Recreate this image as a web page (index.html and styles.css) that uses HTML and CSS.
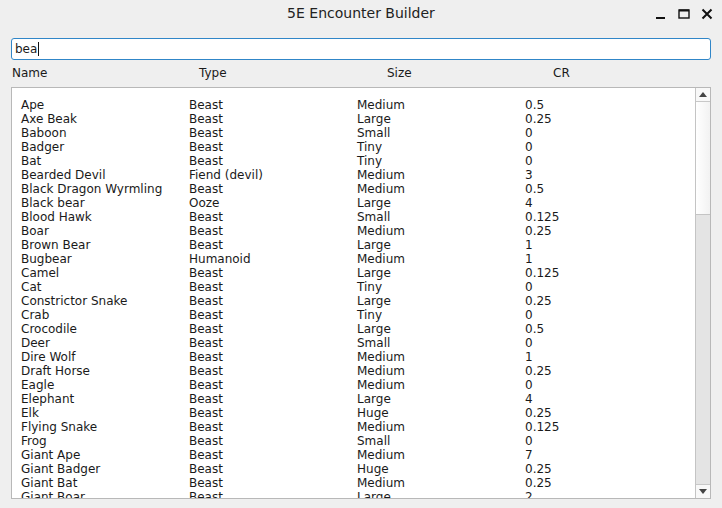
FILE: index.html
```html
<!DOCTYPE html>
<html>
<head>
<meta charset="utf-8">
<link rel="stylesheet" href="styles.css">
</head>
<body>
<div class="window">
  <div class="titlebar">
    <div class="title">5E Encounter Builder</div>
    <div class="controls">
      <svg class="ctl" width="12" height="12" viewBox="0 0 12 12"><rect x="1" y="9" width="9" height="2" fill="#111"/></svg>
      <svg class="ctl" width="12" height="12" viewBox="0 0 12 12"><rect x="1" y="2" width="10" height="8" fill="none" stroke="#111" stroke-width="1.4"/><rect x="1" y="1.5" width="10" height="2" fill="#111"/></svg>
      <svg class="ctl" width="12" height="12" viewBox="0 0 12 12"><path d="M1.5 1.5 L10.5 10.5 M10.5 1.5 L1.5 10.5" stroke="#111" stroke-width="2"/></svg>
    </div>
  </div>
  <div class="content">
    <div class="search"><span>bea</span><span class="caret"></span></div>
    <div class="header">
      <div>Name</div><div>Type</div><div>Size</div><div>CR</div>
    </div>
    <div class="list">
      <div class="rows" id="rows"></div>
      <div class="scrollbar">
        <div class="sbtn"><svg width="8" height="5" viewBox="0 0 8 5"><path d="M4 0 L8 5 L0 5 Z" fill="#444"/></svg></div>
        <div class="track">
          <div class="thumb"></div>
        </div>
        <div class="sbtn"><svg width="8" height="5" viewBox="0 0 8 5"><path d="M0 0 L8 0 L4 5 Z" fill="#444"/></svg></div>
      </div>
    </div>
  </div>
</div>
<script>
const data = [
["Ape","Beast","Medium","0.5"],
["Axe Beak","Beast","Large","0.25"],
["Baboon","Beast","Small","0"],
["Badger","Beast","Tiny","0"],
["Bat","Beast","Tiny","0"],
["Bearded Devil","Fiend (devil)","Medium","3"],
["Black Dragon Wyrmling","Beast","Medium","0.5"],
["Black bear","Ooze","Large","4"],
["Blood Hawk","Beast","Small","0.125"],
["Boar","Beast","Medium","0.25"],
["Brown Bear","Beast","Large","1"],
["Bugbear","Humanoid","Medium","1"],
["Camel","Beast","Large","0.125"],
["Cat","Beast","Tiny","0"],
["Constrictor Snake","Beast","Large","0.25"],
["Crab","Beast","Tiny","0"],
["Crocodile","Beast","Large","0.5"],
["Deer","Beast","Small","0"],
["Dire Wolf","Beast","Medium","1"],
["Draft Horse","Beast","Medium","0.25"],
["Eagle","Beast","Medium","0"],
["Elephant","Beast","Large","4"],
["Elk","Beast","Huge","0.25"],
["Flying Snake","Beast","Medium","0.125"],
["Frog","Beast","Small","0"],
["Giant Ape","Beast","Medium","7"],
["Giant Badger","Beast","Huge","0.25"],
["Giant Bat","Beast","Medium","0.25"],
["Giant Boar","Beast","Large","2"]
];
const rows = document.getElementById("rows");
for (const r of data) {
  const row = document.createElement("div");
  row.className = "row";
  for (const c of r) {
    const cell = document.createElement("div");
    cell.textContent = c;
    row.appendChild(cell);
  }
  rows.appendChild(row);
}
</script>
</body>
</html>
```

FILE: styles.css
```css
html, body {
  margin: 0;
  padding: 0;
  background: #efefef;
  font-family: "DejaVu Sans", sans-serif;
  color: #1a1a1a;
}
.window {
  width: 722px;
  height: 508px;
  display: flex;
  flex-direction: column;
  overflow: hidden;
}
.titlebar {
  height: 28px;
  position: relative;
  display: flex;
  align-items: center;
  justify-content: center;
}
.title {
  font-size: 14px;
  color: #222;
  margin-top: -2px;
}
.controls {
  position: absolute;
  right: 9px;
  top: 8px;
  display: flex;
  gap: 11px;
}
.ctl { display: block; }
.content {
  padding: 10px 11px 0 11px;
  display: flex;
  flex-direction: column;
  flex: 1;
}
.search {
  height: 20px;
  border: 1px solid #3086c8;
  border-radius: 3px;
  background: #fff;
  font-size: 12px;
  display: flex;
  align-items: center;
  padding-left: 3px;
}
.caret {
  display: inline-block;
  width: 1px;
  height: 14px;
  background: #111;
  margin-left: 1px;
}
.header {
  display: grid;
  grid-template-columns: 187px 188px 166px 1fr;
  font-size: 12px;
  padding-left: 1px;
  height: 18px;
  margin-top: 4px;
  margin-bottom: 1px;
  align-items: center;
}
.list {
  margin-top: 4px;
  height: 410px;
  border: 1px solid #b8b8b8;
  background: #fff;
  display: flex;
}
.rows {
  flex: 1;
  padding: 10px 0 0 9px;
  overflow: hidden;
}
.row {
  display: grid;
  grid-template-columns: 168px 168px 168px 1fr;
  font-size: 12px;
  height: 14px;
  line-height: 14px;
}
.scrollbar {
  width: 14px;
  border-left: 1px solid #c4c4c4;
  display: flex;
  flex-direction: column;
  background: #e4e4e4;
}
.sbtn {
  height: 13px;
  background: #f8f8f8;
  display: flex;
  align-items: center;
  justify-content: center;
  border-bottom: 1px solid #c8c8c8;
}
.sbtn:last-child {
  border-bottom: none;
  border-top: 1px solid #c8c8c8;
}
.track {
  flex: 1;
}
.thumb {
  height: 112px;
  background: linear-gradient(to right, #ffffff, #f2f2f2);
  border-bottom: 1px solid #c4c4c4;
}
```
